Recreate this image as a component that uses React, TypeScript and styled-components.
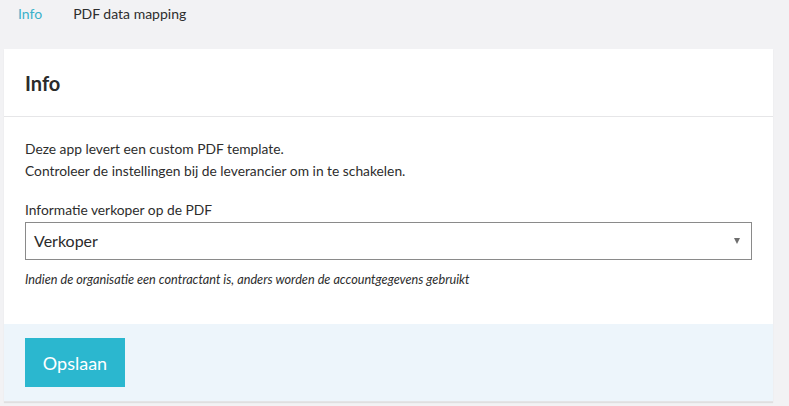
import React from 'react'
import styled, { createGlobalStyle } from 'styled-components'

const GlobalStyle = createGlobalStyle`
  html, body {
    margin: 0;
    padding: 0;
    background: #f2f2f4;
    font-family: Lato, "Open Sans", sans-serif;
    color: #2d2d2d;
  }
`

const App: React.FC = () => {
  return (
    <>
      <GlobalStyle />
      <StyledPage>
        <StyledTabs>
          <StyledTab active>Info</StyledTab>
          <StyledTab>PDF data mapping</StyledTab>
        </StyledTabs>
        <StyledCard>
          <StyledCardHeader>Info</StyledCardHeader>
          <StyledCardBody>
            <StyledText>
              Deze app levert een custom PDF template.
              <br />
              Controleer de instellingen bij de leverancier om in te schakelen.
            </StyledText>
            <StyledField>
              <StyledLabel>Informatie verkoper op de PDF</StyledLabel>
              <StyledSelect>
                <span>Verkoper</span>
                <StyledArrow />
              </StyledSelect>
              <StyledHelp>
                Indien de organisatie een contractant is, anders worden de accountgegevens gebruikt
              </StyledHelp>
            </StyledField>
          </StyledCardBody>
          <StyledCardFooter>
            <StyledButton>Opslaan</StyledButton>
          </StyledCardFooter>
        </StyledCard>
      </StyledPage>
    </>
  )
}

const StyledPage = styled.div`
  padding: 0 16px 6px 4px;
`

const StyledTabs = styled.div`
  display: flex;
  align-items: center;
  gap: 31px;
  height: 26px;
  padding: 0 0 23px 14px;
`

const StyledTab = styled.div<{ active?: boolean }>`
  font-size: 14px;
  color: ${(props) => (props.active ? '#3ab1ca' : '#2d2d2d')};
`

const StyledCard = styled.div`
  background: #fff;
  box-shadow: 0 1px 1px rgba(0, 0, 0, 0.08);
`

const StyledCardHeader = styled.div`
  height: 68px;
  box-sizing: border-box;
  display: flex;
  align-items: center;
  padding: 0 21px;
  font-size: 20px;
  font-weight: 700;
  color: #2b2b2b;
  border-bottom: 1px solid #e6e6e8;
`

const StyledCardBody = styled.div`
  padding: 21px 21px 37px;
`

const StyledText = styled.p`
  margin: 0 0 19px;
  font-size: 13.8px;
  line-height: 22px;
  color: #2d2d2d;
`

const StyledField = styled.div`
  display: flex;
  flex-direction: column;
`

const StyledLabel = styled.label`
  font-size: 13.8px;
  line-height: 17px;
  margin-bottom: 4px;
  color: #2d2d2d;
`

const StyledSelect = styled.div`
  position: relative;
  height: 38px;
  box-sizing: border-box;
  border: 1px solid #8a8a8a;
  display: flex;
  align-items: center;
  padding: 0 8px 1px;
  font-size: 16px;
  color: #2b2b2b;
`

const StyledArrow = styled.span`
  position: absolute;
  right: 11px;
  top: 15px;
  width: 0;
  height: 0;
  border-left: 3.5px solid transparent;
  border-right: 3.5px solid transparent;
  border-top: 6px solid #6e6e6e;
`

const StyledHelp = styled.div`
  margin-top: 11px;
  font-size: 12.7px;
  font-style: italic;
  line-height: 16px;
  color: #2d2d2d;
`

const StyledCardFooter = styled.div`
  background: #edf5fb;
  padding: 14px 21px;
  border-bottom: 1px solid #e4e4e6;
`

const StyledButton = styled.button`
  display: block;
  width: 100px;
  height: 49px;
  border: none;
  background: #2bb7cf;
  color: #fff;
  font-family: Lato, "Open Sans", sans-serif;
  font-size: 18px;
  cursor: pointer;
`

export default App
